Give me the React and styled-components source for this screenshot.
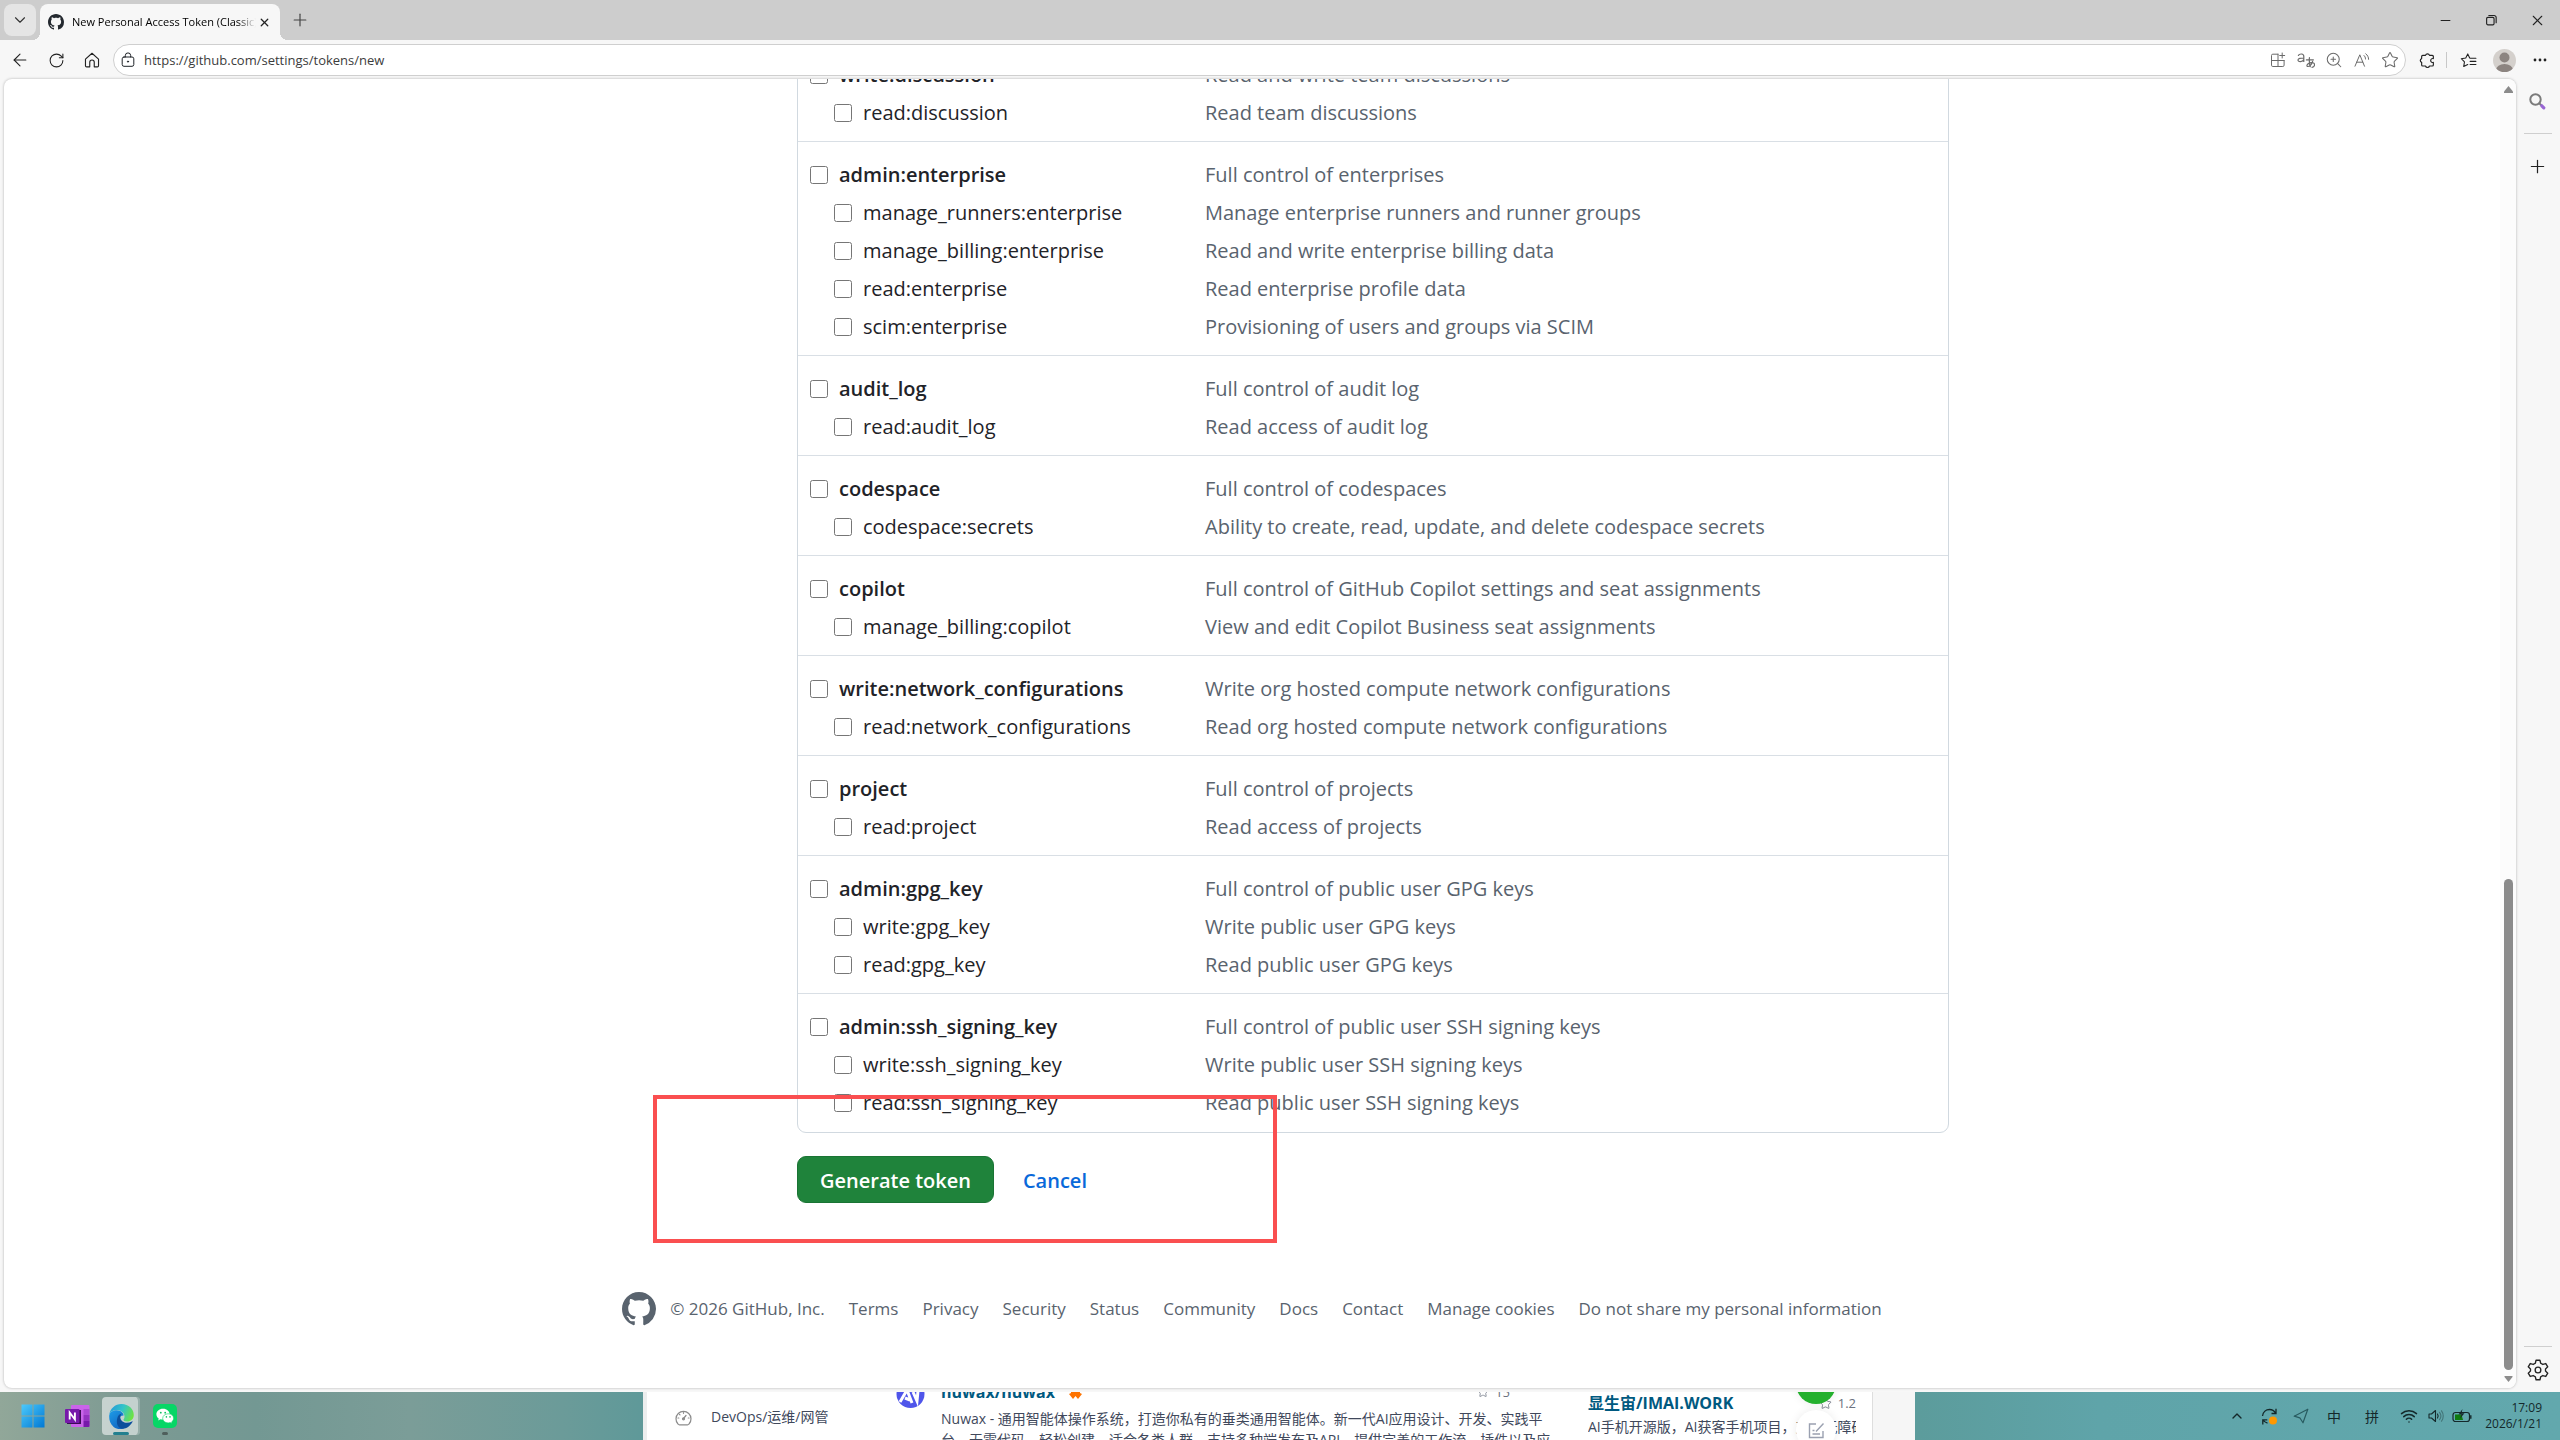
import React, { useState } from 'react';
import styled, { createGlobalStyle } from 'styled-components';
import {
  ArrowLeft,
  ChevronDown,
  ChevronUp,
  Minus,
  Plus,
  RotateCw,
  Star,
  Wifi,
  X,
  ZoomIn,
} from 'lucide-react';

const GlobalStyle = createGlobalStyle`
  * {
    box-sizing: border-box;
  }

  body {
    margin: 0;
    font-family: 'Open Sans', 'Noto Sans CJK SC', sans-serif;
    color: #1f2328;
  }

  button {
    font-family: inherit;
    cursor: pointer;
  }

  ul {
    margin: 0;
    padding: 0;
    list-style: none;
  }
`;

const Desktop = styled.div`
  display: flex;
  flex-direction: column;
  height: 100vh;
  overflow: hidden;
  background: #f7f7f7;
`;

/* ---------- browser chrome ---------- */

const TabStrip = styled.header`
  display: flex;
  align-items: flex-end;
  height: 40px;
  flex: none;
  padding-left: 4px;
  background: #cdcdcd;
`;

const TabMenuButton = styled.button`
  display: flex;
  align-items: center;
  justify-content: center;
  width: 32px;
  height: 32px;
  margin: 0 4px 4px 0;
  padding: 0;
  border: none;
  border-radius: 8px;
  background: #e5e5e5;
  color: #333;
`;

const Tab = styled.div`
  display: flex;
  align-items: center;
  position: relative;
  width: 240px;
  height: 36px;
  padding: 0 8px;
  border-radius: 8px 8px 0 0;
  background: #f7f7f7;

  &::before,
  &::after {
    content: '';
    position: absolute;
    bottom: 0;
    width: 8px;
    height: 8px;
  }

  &::before {
    right: 100%;
    background: radial-gradient(circle at 0 0, transparent 8px, #f7f7f7 8px);
  }

  &::after {
    left: 100%;
    background: radial-gradient(circle at 100% 0, transparent 8px, #f7f7f7 8px);
  }
`;

const TabTitle = styled.span`
  flex: 1;
  margin-left: 8px;
  overflow: hidden;
  white-space: nowrap;
  font-size: 11px;
  line-height: 16px;
  color: #000;
  mask-image: linear-gradient(to right, #000 90%, transparent);
`;

const PlainButton = styled.button`
  display: flex;
  align-items: center;
  justify-content: center;
  flex: none;
  width: ${props => props.$width || 28}px;
  height: ${props => props.$height || 32}px;
  padding: 0;
  border: none;
  background: none;
  color: ${props => props.$color || '#222'};
`;

const WindowControls = styled.div`
  display: flex;
  margin-left: auto;
`;

const Toolbar = styled.nav`
  display: flex;
  align-items: center;
  height: 39px;
  flex: none;
  padding: 1px 2px 0 2px;
`;

const AddressBar = styled.form`
  display: flex;
  align-items: center;
  flex: 1;
  height: 32px;
  margin: 0 7px 0 3px;
  padding: 0 1px 0 6px;
  border: 1px solid #cfcfcf;
  border-radius: 16px;
  background: #fff;
`;

const AddressInput = styled.input`
  flex: 1;
  min-width: 0;
  margin-left: 8px;
  padding: 0;
  border: none;
  outline: none;
  background: none;
  font-family: inherit;
  font-size: 13px;
  color: #3c3c3c;
`;

const ToolbarDivider = styled.span`
  width: 1px;
  height: 16px;
  margin: 0 3px 0 5px;
  background: #c8c8c8;
`;

const Avatar = styled.span`
  display: flex;
  width: 23px;
  height: 23px;
  border-radius: 50%;
  overflow: hidden;
`;

const BrowserBody = styled.div`
  display: flex;
  flex: 1;
  min-height: 0;
  padding: 0 0 4px 4px;
`;

const Viewport = styled.div`
  display: flex;
  flex: 1;
  min-width: 0;
  border-radius: 8px;
  background: #fff;
  box-shadow: 0 0 3px rgba(0, 0, 0, 0.28);
  overflow: hidden;
`;

const ScrollTrack = styled.div`
  display: flex;
  flex-direction: column;
  align-items: center;
  width: 16px;
  padding: 7px 0 6px;
  background: #fcfcfc;
`;

const ScrollSpace = styled.span`
  flex: 8;
`;

const ScrollThumb = styled.span`
  flex: 5;
  width: 9px;
  margin-bottom: 6px;
  border-radius: 5px;
  background: #8b8b8b;
`;

const SideRail = styled.aside`
  display: flex;
  flex-direction: column;
  align-items: center;
  width: 44px;
  padding: 6px 1px 2px 0;
`;

const RailDivider = styled.span`
  width: 28px;
  height: 1px;
  margin: 16px 0;
  background: #cfcfcf;
`;

const RailBottom = styled.div`
  display: flex;
  flex-direction: column;
  align-items: center;
  margin-top: auto;

  ${RailDivider} {
    margin: 0 0 7px;
  }
`;

/* ---------- page ---------- */

const Page = styled.div`
  display: flex;
  flex-direction: column;
  justify-content: flex-end;
  flex: 1;
  min-width: 0;
  overflow: hidden;
  padding-bottom: 62px;
`;

const Main = styled.main`
  width: 100%;
  max-width: 1394px;
  margin: 0 auto;
  padding-left: 242px;
`;

const ScopeList = styled.ul`
  border: 1px solid #d1d9e0;
  border-radius: 9px;
`;

const ScopeGroup = styled.li`
  padding: 14px 12px 9px;
  border-top: 1px solid #d9dfe5;

  &:last-child {
    padding-bottom: 10px;
  }
`;

const ScopeRow = styled.div`
  display: flex;
  align-items: center;
  height: 38px;
  font-size: 20px;
  line-height: 30px;
`;

const ScopeLabel = styled.label`
  display: flex;
  align-items: center;
  gap: 11px;
  flex: none;
  width: 395px;
  padding-left: ${props => (props.$child ? 24 : 0)}px;
  font-weight: ${props => (props.$child ? 400 : 600)};
`;

const Checkbox = styled.input`
  flex: none;
  width: 18px;
  height: 18px;
  margin: 0;
`;

const ScopeDescription = styled.span`
  color: #59636e;
`;

const FormActions = styled.div`
  display: flex;
  align-items: center;
  position: relative;
  margin-top: 23px;
`;

const SubmitButton = styled.button`
  height: 47px;
  padding: 2px 22px 0;
  border: 1px solid #1a7434;
  border-radius: 9px;
  background: #1f833b;
  color: #fff;
  font-size: 20px;
  font-weight: 600;
`;

const CancelLink = styled.a`
  margin-left: 29px;
  padding-top: 2px;
  color: #0969da;
  font-size: 20px;
  font-weight: 600;
  text-decoration: none;
`;

const Highlight = styled.div`
  position: absolute;
  top: -61px;
  left: -144px;
  width: 624px;
  height: 148px;
  border: 4px solid #fa4f50;
  pointer-events: none;
`;

const PageFooter = styled.footer`
  display: flex;
  align-items: center;
  justify-content: center;
  gap: 24px;
  margin-top: 89px;
  font-size: 17px;
  line-height: 24px;
  color: #59636e;
`;

const Copyright = styled.span`
  display: flex;
  align-items: center;
  gap: 14px;
`;

const FooterLink = styled.a`
  color: inherit;
  text-decoration: none;
`;

/* ---------- taskbar ---------- */

const Taskbar = styled.div`
  display: grid;
  grid-template-columns: 643px minmax(0, 1fr) 645px;
  height: 48px;
  flex: none;
  overflow: hidden;
  background: linear-gradient(to right, #91a799 0, #7d9a93 5%, #739893 10%, #7b9d98 16%, #6b9b99 22%, #5f9999 25%, #5c9c9c 75%, #5fa4a9 82%, #62a8ad 100%);
`;

const TaskbarApps = styled.div`
  display: flex;
  align-items: center;
  gap: 6px;
  padding-left: 14px;
`;

const AppButton = styled.button`
  display: flex;
  align-items: center;
  justify-content: center;
  position: relative;
  width: 38px;
  height: 38px;
  padding: 0;
  border: none;
  border-radius: 4px;
  background: ${props => (props.$active ? 'rgba(255, 255, 255, 0.55)' : 'none')};
  box-shadow: ${props => (props.$active ? 'inset -3px 0 0 -1px rgba(120, 150, 145, 0.6)' : 'none')};

  &::after {
    content: '';
    display: ${props => (props.$running ? 'block' : 'none')};
    position: absolute;
    bottom: 0;
    left: 50%;
    width: ${props => (props.$active ? 16 : 6)}px;
    height: 3px;
    border-radius: 2px;
    background: ${props => (props.$active ? '#23808f' : '#4f5f5c')};
    transform: translateX(-50%);
  }
`;

const BackWindow = styled.div`
  display: flex;
  overflow: hidden;
  border-left: 4px solid #eceeee;
  background: #f6f6f6;
`;

const BackPage = styled.div`
  display: flex;
  flex: 1;
  min-width: 0;
  margin-right: 42px;
  border-right: 1px solid #dedede;
  background: #fff;
  font-size: 14px;
  line-height: 22px;
  color: #40485b;
`;

const Category = styled.div`
  display: flex;
  align-items: center;
  gap: 19px;
  flex: none;
  width: 249px;
  height: 50px;
  padding-left: 28px;
  color: #40485b;
`;

const RepoEntry = styled.article`
  display: flex;
  gap: 16px;
  flex: none;
  width: 660px;
  margin-top: -12px;
`;

const RepoBody = styled.div`
  flex: 1;
  min-width: 0;
  white-space: nowrap;
`;

const RepoTitle = styled.div`
  display: flex;
  align-items: center;
  gap: 14px;
  height: ${props => props.$height || 23}px;
`;

const RepoLink = styled.a`
  color: #005980;
  font-size: 16px;
  font-weight: 700;
  text-decoration: none;
`;

const Stars = styled.span`
  display: flex;
  align-items: center;
  gap: 6px;
  margin-left: auto;
  margin-right: ${props => props.$inset || 0}px;
  font-size: 13px;
  color: #6b7280;
`;

const RepoText = styled.p`
  margin: 5px 0 0;
  line-height: 21px;
`;

const SideEntry = styled.article`
  position: relative;
  flex: none;
  width: 268px;
  margin-left: 32px;
  white-space: nowrap;
`;

const SideText = styled.p`
  margin: 2px 0 0;
  overflow: hidden;
`;

const FloatingButton = styled.button`
  display: flex;
  align-items: center;
  justify-content: center;
  position: absolute;
  top: ${props => props.$top}px;
  right: 20px;
  width: 40px;
  height: 40px;
  padding: 0;
  border: none;
  border-radius: 50%;
  background: ${props => props.$fill || '#fff'};
  box-shadow: 0 0 10px rgba(0, 0, 0, 0.08);
`;

const Tray = styled.div`
  display: flex;
  align-items: center;
  justify-content: flex-end;
  padding-right: 18px;
  color: #14282a;
`;

const TrayItem = styled.span`
  display: flex;
  align-items: center;
  justify-content: center;
  flex: none;
  width: ${props => props.$width}px;
  font-size: 14px;
`;

const Clock = styled.time`
  width: 63px;
  font-size: 12px;
  line-height: 16px;
  text-align: right;
  white-space: nowrap;
`;

const scopeGroups = [
  [
    ['write:discussion', 'Read and write team discussions'],
    ['read:discussion', 'Read team discussions'],
  ],
  [
    ['admin:enterprise', 'Full control of enterprises'],
    ['manage_runners:enterprise', 'Manage enterprise runners and runner groups'],
    ['manage_billing:enterprise', 'Read and write enterprise billing data'],
    ['read:enterprise', 'Read enterprise profile data'],
    ['scim:enterprise', 'Provisioning of users and groups via SCIM'],
  ],
  [
    ['audit_log', 'Full control of audit log'],
    ['read:audit_log', 'Read access of audit log'],
  ],
  [
    ['codespace', 'Full control of codespaces'],
    ['codespace:secrets', 'Ability to create, read, update, and delete codespace secrets'],
  ],
  [
    ['copilot', 'Full control of GitHub Copilot settings and seat assignments'],
    ['manage_billing:copilot', 'View and edit Copilot Business seat assignments'],
  ],
  [
    ['write:network_configurations', 'Write org hosted compute network configurations'],
    ['read:network_configurations', 'Read org hosted compute network configurations'],
  ],
  [
    ['project', 'Full control of projects'],
    ['read:project', 'Read access of projects'],
  ],
  [
    ['admin:gpg_key', 'Full control of public user GPG keys'],
    ['write:gpg_key', 'Write public user GPG keys'],
    ['read:gpg_key', 'Read public user GPG keys'],
  ],
  [
    ['admin:ssh_signing_key', 'Full control of public user SSH signing keys'],
    ['write:ssh_signing_key', 'Write public user SSH signing keys'],
    ['read:ssh_signing_key', 'Read public user SSH signing keys'],
  ],
];

const footerLinks = [
  'Terms',
  'Privacy',
  'Security',
  'Status',
  'Community',
  'Docs',
  'Contact',
  'Manage cookies',
  'Do not share my personal information',
];

/* Thin line icon on a 16 unit grid */
function LineIcon({ size = 16, stroke = 1, children }) {
  return (
    <svg
      width={size}
      height={size}
      viewBox="0 0 16 16"
      fill="none"
      stroke="currentColor"
      strokeWidth={stroke}
      strokeLinecap="round"
      strokeLinejoin="round"
      aria-hidden="true"
    >
      {children}
    </svg>
  );
}

function GitHubMark({ size = 16, color = 'currentColor' }) {
  return (
    <svg width={size} height={size} viewBox="0 0 16 16" fill={color} aria-hidden="true">
      <path d="M8 0C3.58 0 0 3.58 0 8c0 3.54 2.29 6.53 5.47 7.59.4.07.55-.17.55-.38 0-.19-.01-.82-.01-1.49-2.01.37-2.53-.49-2.69-.94-.09-.23-.48-.94-.82-1.13-.28-.15-.68-.52-.01-.53.63-.01 1.08.58 1.23.82.72 1.21 1.87.87 2.33.66.07-.52.28-.87.51-1.07-1.78-.2-3.64-.89-3.64-3.95 0-.87.31-1.59.82-2.15-.08-.2-.36-1.02.08-2.12 0 0 .67-.21 2.2.82.64-.18 1.32-.27 2-.27s1.36.09 2 .27c1.53-1.04 2.2-.82 2.2-.82.44 1.1.16 1.92.08 2.12.51.56.82 1.27.82 2.15 0 3.07-1.87 3.75-3.65 3.95.29.25.54.73.54 1.48 0 1.07-.01 1.93-.01 2.2 0 .21.15.46.55.38A8.01 8.01 0 0 0 16 8c0-4.42-3.58-8-8-8z" />
    </svg>
  );
}

function TabBar() {
  return (
    <TabStrip>
      <TabMenuButton aria-label="Tab actions">
        <ChevronDown size={18} strokeWidth={1.5} />
      </TabMenuButton>
      <Tab>
        <GitHubMark color="#24292f" />
        <TabTitle>New Personal Access Token (Classic)</TabTitle>
        <PlainButton $width={16} aria-label="Close tab">
          <X size={13} strokeWidth={2.4} />
        </PlainButton>
      </Tab>
      <PlainButton $width={40} $height={40} $color="#444" aria-label="New tab">
        <Plus size={20} strokeWidth={1.4} />
      </PlainButton>
      <WindowControls>
        <PlainButton $width={46} $height={40} aria-label="Minimize">
          <Minus size={15} strokeWidth={1.8} />
        </PlainButton>
        <PlainButton $width={46} $height={40} aria-label="Restore">
          <LineIcon size={14} stroke={1.3}>
            <rect x="3" y="5" width="8.5" height="8.5" rx="1.5" />
            <path d="M5.5 2.8h6a2.4 2.4 0 0 1 2.4 2.4v6" />
          </LineIcon>
        </PlainButton>
        <PlainButton $width={46} $height={40} aria-label="Close window">
          <X size={17} strokeWidth={1.5} />
        </PlainButton>
      </WindowControls>
    </TabStrip>
  );
}

function BrowserToolbar() {
  const [url, setUrl] = useState('https://github.com/settings/tokens/new');

  return (
    <Toolbar>
      <PlainButton $width={36} aria-label="Back">
        <ArrowLeft size={20} strokeWidth={1.3} />
      </PlainButton>
      <PlainButton $width={36} aria-label="Refresh">
        <RotateCw size={17} strokeWidth={1.5} />
      </PlainButton>
      <PlainButton $width={36} aria-label="Home">
        <LineIcon size={18}>
          <path d="M2.2 7.2 8 2l5.8 5.2v5.9a1 1 0 0 1-1 1H10V10a2 2 0 0 0-4 0v4.1H3.2a1 1 0 0 1-1-1z" />
        </LineIcon>
      </PlainButton>
      <AddressBar onSubmit={(e) => e.preventDefault()}>
        <LineIcon size={16}>
          <rect x="2.2" y="5" width="11.6" height="9.3" rx="1.8" />
          <path d="M5.3 5V3.6a2.7 2.7 0 0 1 5.4 0V5" />
          <circle cx="8" cy="9.6" r="0.6" fill="currentColor" />
        </LineIcon>
        <AddressInput
          aria-label="Address"
          value={url}
          onChange={(e) => setUrl(e.target.value)}
        />
        <PlainButton type="button" $color="#6b6b6b" aria-label="Install app">
          <LineIcon>
            <path d="M8 2.2H2.8a1.3 1.3 0 0 0-1.3 1.3v9.7a1.3 1.3 0 0 0 1.3 1.3h10a1.3 1.3 0 0 0 1.3-1.3V8.5M8 2.2v12.3M1.5 8.5h12.6M12.2 1v5M9.7 3.5h5" />
          </LineIcon>
        </PlainButton>
        <PlainButton type="button" $color="#6b6b6b" aria-label="Translate">
          <svg width="18" height="18" viewBox="0 0 18 18" fill="none" stroke="currentColor" strokeWidth="1.2" strokeLinecap="round" aria-hidden="true">
            <path d="M1.4 4.4c1.2-2 5.4-2 5.4 1v5M6.8 7C3.4 7 1 7.4 1 9.1c0 2.2 4.6 1.9 5.8-.7" />
            <path d="M9.4 8.9h7M12.4 6.7c-.3 3.2 0 6.3.9 9M15.6 10.4c-.8 3.4-3.3 5.5-5.3 5-1.5-1.2 2-4.7 5.5-3.6 3 .9 1.8 4.3-.8 4.5" />
          </svg>
        </PlainButton>
        <PlainButton type="button" $color="#6b6b6b" aria-label="Zoom">
          <ZoomIn size={18} strokeWidth={1.4} />
        </PlainButton>
        <PlainButton type="button" $color="#6b6b6b" aria-label="Read aloud">
          <LineIcon>
            <path d="M1 14.2 5.8 2.8l4.7 11.4M2.7 10.2h6.1M10 3.5c1 .9 1.5 2 1.5 3.5M11.8 1.8c1.9 1.5 2.8 3.4 2.8 5.5" />
          </LineIcon>
        </PlainButton>
        <PlainButton type="button" $color="#6b6b6b" aria-label="Add to favorites">
          <Star size={18} strokeWidth={1.4} />
        </PlainButton>
      </AddressBar>
      <PlainButton aria-label="Extensions">
        <LineIcon size={17} stroke={1.1}>
          <path d="M3.5 3.2h2.6a2 2 0 0 1 3.8 0h2.6a1 1 0 0 1 1 1v2a1.9 1.9 0 1 0 0 3.6v2.4a1 1 0 0 1-1 1H9.9a2 2 0 0 1-3.8 0H3.5a1 1 0 0 1-1-1V9.8a1.9 1.9 0 0 1 0-3.6v-2a1 1 0 0 1 1-1z" />
        </LineIcon>
      </PlainButton>
      <ToolbarDivider />
      <PlainButton $width={36} aria-label="Favorites">
        <LineIcon size={17}>
          <path d="M9 5.5 7.3 1.8 5.4 5.7l-4.2.6 3 3-.7 4.4 3.8-2M9.5 5.8H15M9.5 8.8H15M9.5 11.8H15" />
        </LineIcon>
      </PlainButton>
      <PlainButton $width={36} aria-label="Profile">
        <Avatar>
          <svg width="23" height="23" viewBox="0 0 23 23" aria-hidden="true">
            <rect width="23" height="23" fill="#d4d0cc" />
            <circle cx="11.5" cy="8.5" r="5" fill="#8c8480" />
            <ellipse cx="11.5" cy="21" rx="8.5" ry="6" fill="#8c8480" />
          </svg>
        </Avatar>
      </PlainButton>
      <PlainButton $width={36} aria-label="Settings and more">
        <svg width="14" height="4" viewBox="0 0 14 4" fill="currentColor" aria-hidden="true">
          <circle cx="2" cy="2" r="1.4" />
          <circle cx="7" cy="2" r="1.4" />
          <circle cx="12" cy="2" r="1.4" />
        </svg>
      </PlainButton>
    </Toolbar>
  );
}

function Scope({ name, description, child }) {
  return (
    <ScopeRow>
      <ScopeLabel $child={child}>
        <Checkbox type="checkbox" name="scopes" value={name} />
        {name}
      </ScopeLabel>
      <ScopeDescription>{description}</ScopeDescription>
    </ScopeRow>
  );
}

function TokenPage() {
  return (
    <Page>
      <Main>
        <form onSubmit={(e) => e.preventDefault()}>
          <ScopeList>
            {scopeGroups.map(group => (
              <ScopeGroup key={group[0][0]}>
                {group.map(([name, description], i) => (
                  <Scope key={name} name={name} description={description} child={i > 0} />
                ))}
              </ScopeGroup>
            ))}
          </ScopeList>
          <FormActions>
            <SubmitButton type="submit">Generate token</SubmitButton>
            <CancelLink href="#cancel">Cancel</CancelLink>
            <Highlight />
          </FormActions>
        </form>
      </Main>
      <PageFooter>
        <Copyright>
          <GitHubMark size={34} />
          © 2026 GitHub, Inc.
        </Copyright>
        {footerLinks.map(text => (
          <FooterLink key={text} href="#footer">{text}</FooterLink>
        ))}
      </PageFooter>
    </Page>
  );
}

function Rail() {
  return (
    <SideRail>
      <PlainButton aria-label="Search">
        <svg width="17" height="17" viewBox="0 0 17 17" fill="none" strokeLinecap="round" aria-hidden="true">
          <circle cx="6.5" cy="6.5" r="5.2" stroke="#7b7b7b" strokeWidth="2" />
          <path d="m10.5 10.5 1.5 1.5" stroke="#7b7b7b" strokeWidth="2" />
          <path d="m12.8 12.8 2 2" stroke="#9866d3" strokeWidth="3.2" />
        </svg>
      </PlainButton>
      <RailDivider />
      <PlainButton aria-label="Customize">
        <Plus size={21} strokeWidth={1.4} />
      </PlainButton>
      <RailBottom>
        <RailDivider />
        <PlainButton aria-label="Settings">
          <LineIcon size={24} stroke={0.9}>
            <circle cx="8" cy="8" r="1.9" />
            <path d="M6.7 1.5h2.6l.5 2 1.4.8 2-.6 1.3 2.2L13 7.3v1.4l1.5 1.4-1.3 2.2-2-.6-1.4.8-.5 2H6.7l-.5-2-1.4-.8-2 .6-1.3-2.2L3 8.7V7.3L1.5 5.9l1.3-2.2 2 .6 1.4-.8z" />
          </LineIcon>
        </PlainButton>
      </RailBottom>
    </SideRail>
  );
}

function AppIcons() {
  return (
    <TaskbarApps>
      <AppButton aria-label="Start">
        <svg width="24" height="24" viewBox="0 0 24 24" aria-hidden="true">
          <defs>
            <linearGradient id="start" x1="0" y1="0" x2="1" y2="1">
              <stop offset="0" stopColor="#4cc9fb" />
              <stop offset="1" stopColor="#0078d4" />
            </linearGradient>
          </defs>
          <path fill="url(#start)" d="M.5.5h11v11H.5zM12.5.5h11v11h-11zM.5 12.5h11v11H.5zM12.5 12.5h11v11h-11z" />
        </svg>
      </AppButton>
      <AppButton aria-label="OneNote">
        <svg width="25" height="24" viewBox="0 0 25 24" aria-hidden="true">
          <rect x="6" y="1" width="18.5" height="22" rx="1" fill="#ca64ea" />
          <path fill="#ae4bd5" d="M18.5 5h6v6h-6z" />
          <path fill="#9332bf" d="M18.5 11h6v6h-6z" />
          <path fill="#7719aa" d="M18.5 17h6v5a1 1 0 0 1-1 1h-5z" />
          <rect x="2" y="6" width="14" height="14" fill="#3b0c55" />
          <rect x="0" y="5" width="14.5" height="14" rx="1" fill="#7719aa" />
          <path d="M4.7 15.5v-7l5.2 7v-7" fill="none" stroke="#fff" strokeWidth="1.9" />
        </svg>
      </AppButton>
      <AppButton $active $running aria-label="Microsoft Edge">
        <svg width="25" height="25" viewBox="0 0 24 24" aria-hidden="true">
          <defs>
            <linearGradient id="edgeTop" x1="0" y1="0.3" x2="1" y2="0.6">
              <stop offset="0" stopColor="#249bd8" />
              <stop offset="0.5" stopColor="#33c4c8" />
              <stop offset="1" stopColor="#6fe43f" />
            </linearGradient>
            <linearGradient id="edgeSide" x1="0" y1="0" x2="0.8" y2="1">
              <stop offset="0" stopColor="#1e9de8" />
              <stop offset="1" stopColor="#1060bd" />
            </linearGradient>
          </defs>
          <path fill="url(#edgeSide)" d="M.2 11C1 7 4.5 5.8 7.5 6c4 .2 6.5 2.5 6.5 5-3 0-4.5 2-4 4.5.6 3.5 4 5.5 8 5.5-4 3.5-9.5 4-13.5 1C.8 19 0 15 .2 11z" />
          <path fill="#0c4f9c" d="M8 13.5c.5-2.5 2.5-4.2 4.5-4.3-2.3 2-2.3 5.5.5 7.5 2.5 1.8 6 1.5 9 0 .5-.2.8.2.5.6-3 5.2-8 7.7-12 5.7-3-1.5-3.5-6-2.5-9.5z" />
          <path fill="url(#edgeTop)" d="M.2 11C.8 4.5 6 .1 12 .1c7 0 11.8 5 11.8 10.4 0 4-3 6.3-6.3 6.3-2.5 0-3.8-.8-3.6-1.6.1-.6 1-1.1 1-3.1 0-3.6-3.5-6.3-7.4-6.3C4 5.8.9 7.5.2 11z" />
        </svg>
      </AppButton>
      <AppButton $running aria-label="WeChat">
        <svg width="24" height="24" viewBox="0 0 24 24" aria-hidden="true">
          <rect width="24" height="24" rx="5" fill="#07d666" />
          <path fill="#fff" d="M10 4.8c-4 0-6.6 2.5-6.6 5.5 0 1.8.9 3.2 2.3 4.2l-.5 1.9 2.2-1.2c.8.2 1.7.3 2.6.3 4 0 6.6-2.3 6.6-5.2S14 4.8 10 4.8z" />
          <path fill="#fff" stroke="#07d666" strokeWidth="0.6" d="M15.2 9.8c-3.2 0-5.5 2-5.5 4.5s2.3 4.6 5.5 4.6c.7 0 1.4-.1 2-.3l1.9 1-.5-1.7c1.3-.9 2-2.1 2-3.6 0-2.5-2.2-4.5-5.4-4.5z" />
          <g fill="#0cc160">
            <circle cx="7.8" cy="8.7" r="0.9" />
            <circle cx="12.2" cy="8.7" r="0.9" />
            <circle cx="13.4" cy="12.9" r="0.8" />
            <circle cx="17" cy="12.9" r="0.8" />
          </g>
        </svg>
      </AppButton>
    </TaskbarApps>
  );
}

function PageBehind() {
  return (
    <BackWindow>
      <BackPage>
        <Category>
          <svg width="17" height="17" viewBox="0 0 17 17" fill="none" stroke="#8b8b8b" strokeWidth="1.2" strokeLinecap="round" aria-hidden="true">
            <path d="M3 15a7.5 7.5 0 1 1 11 0q-.6.8-1.5.8h-8Q3.6 15.8 3 15z" />
            <path d="M8.5 9.5 11 6.5M8.5 3.5v.8M4.5 5.3l.5.5M3 9h.8M13.3 9h.7" />
            <circle cx="8.5" cy="9.8" r="1" />
          </svg>
          DevOps/运维/网管
        </Category>
        <RepoEntry>
          <svg width="29" height="29" viewBox="0 0 29 29" aria-hidden="true">
            <circle cx="14.5" cy="14" r="14" fill="#4f55ea" />
            <path d="m4 22 7-12 5 13M9 18l5 2M17 12l4 9 1-10" fill="none" stroke="#fff" strokeWidth="3" />
          </svg>
          <RepoBody>
            <RepoTitle>
              <RepoLink href="#nuwax">nuwax/nuwax</RepoLink>
              <svg width="13" height="14" viewBox="0 0 13 14" aria-hidden="true">
                <path fill="#fe7300" d="M2 2h9v6l2 1-4 5-2.5-3L4 14 0 9l2-1z" />
              </svg>
              <Stars $inset={46}>
                <Star size={12} strokeWidth={1.5} />
                15
              </Stars>
            </RepoTitle>
            <RepoText>
              Nuwax - 通用智能体操作系统，打造你私有的垂类通用智能体。新一代AI应用设计、开发、实践平
              <br />
              台，无需代码，轻松创建，适合各类人群，支持多种端发布及API，提供完善的工作流、插件以及应
            </RepoText>
          </RepoBody>
        </RepoEntry>
        <SideEntry>
          <RepoTitle $height={22}>
            <RepoLink href="#imai">显生宙/IMAI.WORK</RepoLink>
            <Stars>
              <Star size={13} strokeWidth={1.5} />
              1.2
            </Stars>
          </RepoTitle>
          <SideText>AI手机开源版，AI获客手机项目，支持无障碍</SideText>
          <FloatingButton $top={-28} $fill="#24b02e" aria-label="Chat" />
          <FloatingButton $top={18} aria-label="Feedback">
            <svg width="17" height="17" viewBox="0 0 17 17" fill="none" stroke="#9aa0b0" strokeWidth="1.4" aria-hidden="true">
              <path d="M8 2H1.5v13.5H15V9M15.5 1.5 8 9.5M4.5 12H12M4.5 8.5h2" />
            </svg>
          </FloatingButton>
        </SideEntry>
      </BackPage>
    </BackWindow>
  );
}

function SystemTray() {
  return (
    <Tray>
      <TrayItem $width={30}>
        <ChevronUp size={16} strokeWidth={2} />
      </TrayItem>
      <TrayItem $width={34}>
        <svg width="17" height="17" viewBox="0 0 17 17" fill="none" stroke="currentColor" strokeWidth="1.3" aria-hidden="true">
          <path d="M1.5 8C2 4 5 1.5 8.5 1.5c2.5 0 4.7 1.2 6 3.5M15 .8v4.7h-4.5M6.5 15.2C4.6 14.7 3 13.5 2 12M1.8 16.5v-4.7h4.5" />
          <circle cx="12" cy="12.5" r="4" fill="#ff9800" stroke="none" />
        </svg>
      </TrayItem>
      <TrayItem $width={29}>
        <LineIcon size={16} stroke={1.2}>
          <path d="M14.8 1.2 1.2 8.2l5.6 1.6 3.2 5z" stroke="#285b60" />
        </LineIcon>
      </TrayItem>
      <TrayItem $width={38}>中</TrayItem>
      <TrayItem $width={38}>拼</TrayItem>
      <TrayItem $width={36}>
        <Wifi size={18} strokeWidth={2} />
      </TrayItem>
      <TrayItem $width={18}>
        <LineIcon size={16} stroke={1.1}>
          <path d="M1 6h2.5l4-3.5v11L3.5 10H1zM9.5 6c.8 1.2.8 2.8 0 4" />
          <path d="M11.5 4.3c1.7 2.2 1.7 5.2 0 7.4M13.5 2.8c2.3 3 2.3 7.4 0 10.4" opacity="0.4" />
        </LineIcon>
      </TrayItem>
      <TrayItem $width={34}>
        <svg width="21" height="14" viewBox="0 0 21 14" aria-hidden="true">
          <rect x="1" y="3.5" width="16.5" height="9" rx="2.5" fill="none" stroke="currentColor" strokeWidth="1.2" />
          <path d="M18.8 6.3v3.4" stroke="currentColor" strokeWidth="1.4" />
          <path d="M3 5.5h6.5L11 11H3z" fill="#0f7b0f" />
          <path d="m10.5 0-4 5.5h3L8 9.5l4.5-5.2h-3z" fill="currentColor" />
        </svg>
      </TrayItem>
      <Clock dateTime="2026-01-21T17:09">
        17:09
        <br />
        2026/1/21
      </Clock>
    </Tray>
  );
}

function App() {
  return (
    <Desktop>
      <GlobalStyle />
      <TabBar />
      <BrowserToolbar />
      <BrowserBody>
        <Viewport>
          <TokenPage />
          <ScrollTrack>
            <svg width="9" height="7" viewBox="0 0 9 7" aria-hidden="true">
              <path d="M4.5 0 9 5.5V7H0V5.5z" fill="#8b8b8b" />
            </svg>
            <ScrollSpace />
            <ScrollThumb />
            <svg width="9" height="6" viewBox="0 0 9 6" aria-hidden="true">
              <path d="M.5 0h8v1l-4 5-4-5z" fill="#8b8b8b" />
            </svg>
          </ScrollTrack>
        </Viewport>
        <Rail />
      </BrowserBody>
      <Taskbar>
        <AppIcons />
        <PageBehind />
        <SystemTray />
      </Taskbar>
    </Desktop>
  );
}

export default App;
